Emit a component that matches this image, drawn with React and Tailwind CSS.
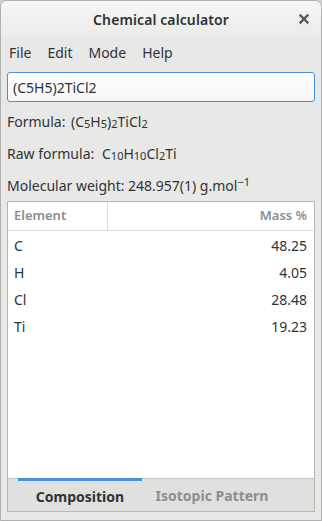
export default function App() {
  const rows = [
    ["C", "48.25"],
    ["H", "4.05"],
    ["Cl", "28.48"],
    ["Ti", "19.23"],
  ];
  const font = { fontFamily: '"Noto Sans", "Open Sans", sans-serif' };
  const sub = "text-[11px] relative top-[1px]";
  return (
    <div className="w-[322px] h-[521px] bg-[#cfcfcf]" style={font}>
      <div className="w-full h-full flex flex-col rounded-t-[7px] border border-[#b0b0ae] bg-[#e8e8e7] text-[#2e3436] overflow-hidden">
        <div className="h-[37px] shrink-0 flex items-center justify-center relative bg-gradient-to-b from-[#f7f7f7] to-[#eaeae9]">
          <span className="text-[14px] font-semibold text-[#2e3436] tracking-[0.1px]">Chemical calculator</span>
          <span className="absolute right-[11px] top-[12px]">
            <svg width="12" height="12" viewBox="0 0 12 12">
              <path d="M2.5 2.5 L9.5 9.5 M9.5 2.5 L2.5 9.5" stroke="#4e5a5e" strokeWidth="2.4" strokeLinecap="square" />
            </svg>
          </span>
        </div>
        <div className="h-[28px] shrink-0 flex items-center gap-[16px] pl-[8px] text-[14px]">
          <span>File</span>
          <span>Edit</span>
          <span>Mode</span>
          <span>Help</span>
        </div>
        <div className="px-[6px] pt-[6px]">
          <div className="h-[30px] rounded-[3px] border border-[#4a90d9] bg-gradient-to-b from-[#ffffff] to-[#f6f6f6] flex items-center px-[5px] text-[14px]">
            (C5H5)2TiCl2
          </div>
        </div>
        <div className="flex flex-col px-[6px] text-[14px] pt-[9px] gap-[11px]">
          <div className="h-[21px] flex items-center">
            <span className="w-[64px]">Formula:</span>
            <span>
              (C<sub className={sub}>5</sub>H<sub className={sub}>5</sub>)<sub className={sub}>2</sub>TiCl<sub className={sub}>2</sub>
            </span>
          </div>
          <div className="h-[21px] flex items-center">
            <span className="w-[95px]">Raw formula:</span>
            <span>
              C<sub className={sub}>10</sub>H<sub className={sub}>10</sub>Cl<sub className={sub}>2</sub>Ti
            </span>
          </div>
          <div className="h-[21px] flex items-center">
            <span className="w-[121px]">Molecular weight:</span>
            <span>
              248.957(1) g.mol<sup className="text-[11px]">−1</sup>
            </span>
          </div>
        </div>
        <div className="flex-1 mx-[6px] mt-[5px] mb-[8px] border border-[#b6b6b3] flex flex-col">
          <div className="flex-1 bg-white flex flex-col text-[14px]">
            <div className="h-[29px] shrink-0 flex border-b border-[#dcdcdc] text-[#8b8e8f] font-semibold text-[13px] mb-[1px]">
              <div className="w-[100px] border-r border-[#dcdcdc] flex items-center pl-[6px]">Element</div>
              <div className="flex-1 flex items-center justify-end pr-[7px]">Mass %</div>
            </div>
            {rows.map(([e, v]) => (
              <div key={e} className="h-[27px] flex items-center justify-between px-[6px] pr-[7px]">
                <span>{e}</span>
                <span>{v}</span>
              </div>
            ))}
          </div>
          <div className="h-[33px] shrink-0 bg-[#e0e0df] border-t border-[#c5c5c3] flex text-[14px] font-bold">
            <div className="w-[124px] ml-[10px] border-t-[3px] border-[#4a90d9] -mt-[1px] flex items-center justify-center text-[#2e3436]">
              Composition
            </div>
            <div className="w-[124px] ml-[8px] flex items-center justify-center text-[#8b8e8f]">Isotopic Pattern</div>
          </div>
        </div>
      </div>
    </div>
  );
}
